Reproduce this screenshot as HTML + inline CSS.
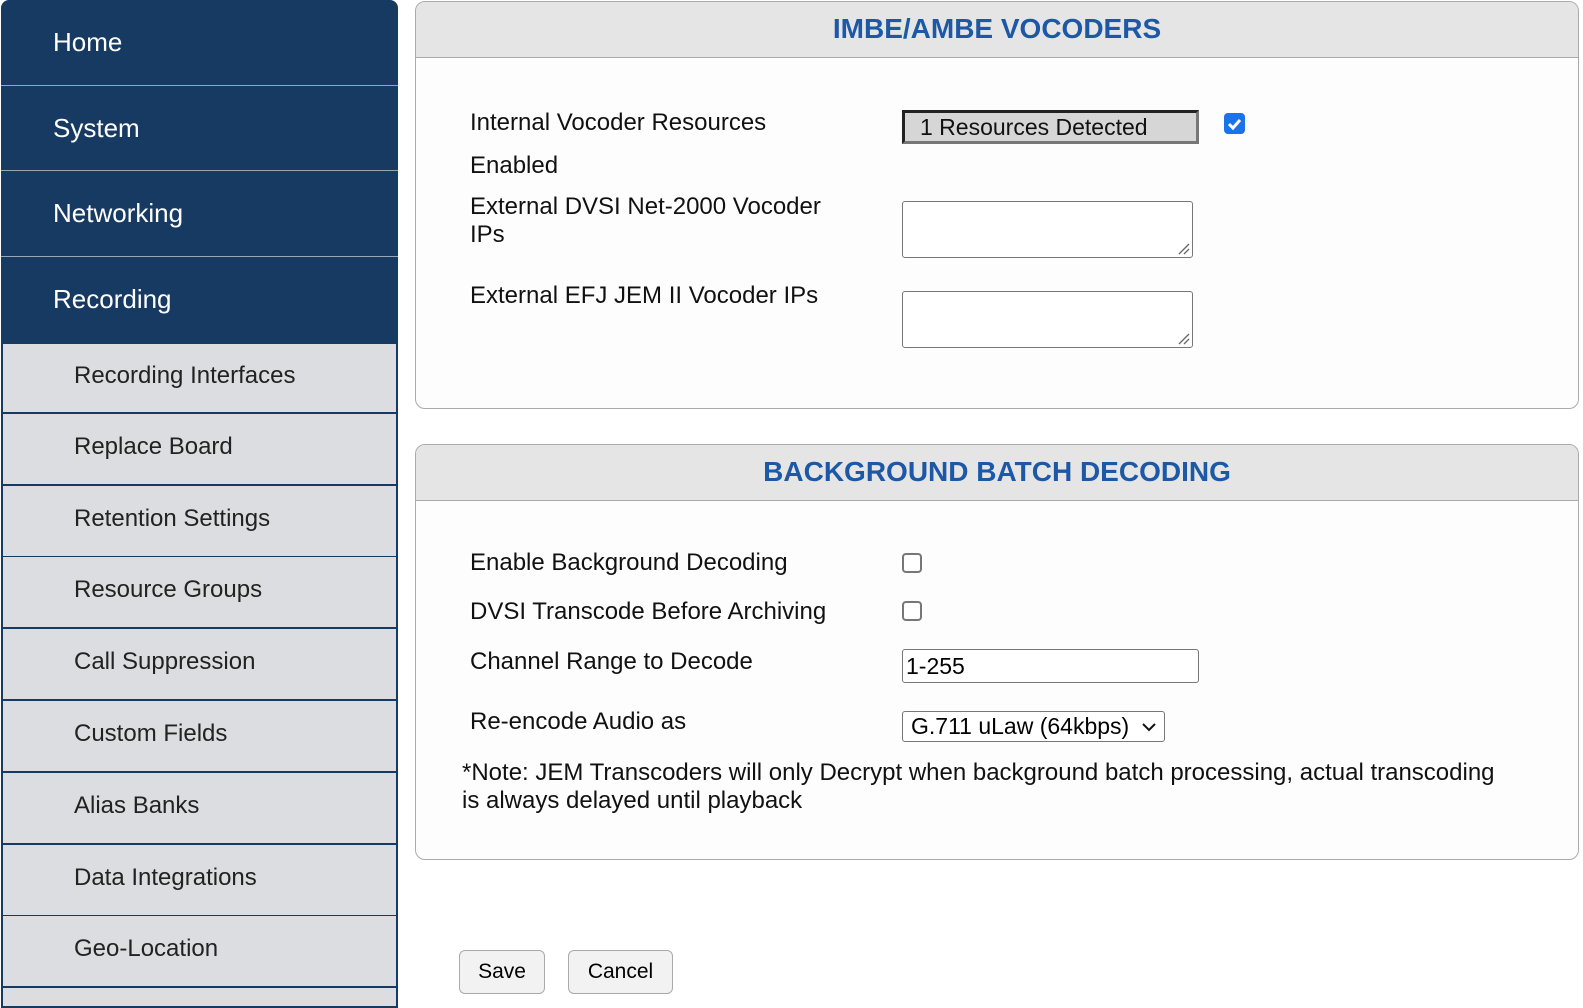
<!DOCTYPE html>
<html><head><style>
body{margin:0;width:1583px;height:1001px;overflow:hidden;background:#fff;font-family:"Liberation Sans",Arial,sans-serif;position:relative}
.a{position:absolute}
.nav{left:1px;width:397px;background:#173a63;color:#fff;font-size:26px;box-sizing:border-box;border-bottom:1px solid #9aa6b6;padding-left:52px;display:flex;align-items:center}
.sub{left:1px;width:397px;background:#dcdde0;color:#222;font-size:24px;box-sizing:border-box;border:2px solid #173a63;border-top:0;padding-left:71px;display:flex;align-items:center;height:72px;padding-bottom:4px}
.box{left:415px;width:1164px;border:1px solid #aaa;border-radius:10px;background:#fdfdfd;box-sizing:border-box;overflow:hidden}
.hd{height:55px;background:#e5e5e5;border-bottom:1px solid #aaa;text-align:center;color:#1d58a7;font-weight:bold;font-size:28px;line-height:54px}
.lb{left:470px;font-size:24px;color:#111;line-height:28px}
.ta{left:902px;width:291px;height:57px;border:1px solid #777;border-radius:3px;background:#fff;box-sizing:border-box}
.cb{width:20px;height:20px;border:2px solid #777;border-radius:4px;box-sizing:border-box;background:#fff;left:902px}
.btn{border:1px solid #aaa;border-radius:6px;background:#f2f2f2;font-size:21px;text-align:center;line-height:42px;top:950px;height:44px;box-sizing:border-box}
</style></head><body>
<div class="a nav" style="top:0;height:86px;border-radius:8px 8px 0 0">Home</div>
<div class="a nav" style="top:86px;height:85px">System</div>
<div class="a nav" style="top:171px;height:86px">Networking</div>
<div class="a nav" style="top:257px;height:85px;border-bottom:0">Recording</div>
<div class="a sub" style="top:342px;border-top:2px solid #173a63">Recording Interfaces</div>
<div class="a sub" style="top:414px">Replace Board</div>
<div class="a sub" style="top:486px">Retention Settings</div>
<div class="a sub" style="top:557px">Resource Groups</div>
<div class="a sub" style="top:629px">Call Suppression</div>
<div class="a sub" style="top:701px">Custom Fields</div>
<div class="a sub" style="top:773px">Alias Banks</div>
<div class="a sub" style="top:845px">Data Integrations</div>
<div class="a sub" style="top:916px">Geo-Location</div>
<div class="a sub" style="top:988px;height:20px"></div>

<div class="a box" style="top:1px;height:408px"><div class="hd">IMBE/AMBE VOCODERS</div></div>
<div class="a lb" style="top:109px">Internal Vocoder Resources</div>
<div class="a lb" style="top:152px">Enabled</div>
<div class="a lb" style="top:193px">External DVSI Net-2000 Vocoder<br>IPs</div>
<div class="a lb" style="top:282px">External EFJ JEM II Vocoder IPs</div>
<div class="a" style="left:902px;top:110px;width:297px;height:34px;background:#d6d6d6;border:3px solid;border-color:#222 #777 #777 #222;box-sizing:border-box;font-size:23px;line-height:28px;padding-left:15px;color:#111">1 Resources Detected</div>
<div class="a" style="left:1224px;top:113px;width:21px;height:21px;background:#1a73e8;border-radius:4px"><svg width="21" height="21"><path d="M5 11l4 4 7-8" stroke="#fff" stroke-width="3" fill="none"/></svg></div>
<div class="a ta" style="top:201px"><svg style="position:absolute;right:2px;bottom:2px" width="12" height="12"><path d="M1 11L11 1M6 11L11 6" stroke="#666" stroke-width="1.3"/></svg></div>
<div class="a ta" style="top:291px"><svg style="position:absolute;right:2px;bottom:2px" width="12" height="12"><path d="M1 11L11 1M6 11L11 6" stroke="#666" stroke-width="1.3"/></svg></div>

<div class="a box" style="top:444px;height:416px"><div class="hd">BACKGROUND BATCH DECODING</div></div>
<div class="a lb" style="top:549px">Enable Background Decoding</div>
<div class="a lb" style="top:598px">DVSI Transcode Before Archiving</div>
<div class="a lb" style="top:648px">Channel Range to Decode</div>
<div class="a lb" style="top:708px">Re-encode Audio as</div>
<div class="a cb" style="top:553px"></div>
<div class="a cb" style="top:601px"></div>
<div class="a" style="left:902px;top:649px;width:297px;height:34px;border:1px solid #777;border-radius:3px;box-sizing:border-box;font-size:23px;line-height:32px;padding-left:3px;background:#fff">1-255</div>
<div class="a" style="left:902px;top:711px;width:263px;height:31px;border:1px solid #777;border-radius:3px;box-sizing:border-box;font-size:23px;line-height:29px;padding-left:8px;background:#fff">G.711 uLaw (64kbps)<svg style="position:absolute;right:8px;top:10px" width="14" height="10"><path d="M1 2l6 6 6-6" stroke="#111" stroke-width="2" fill="none"/></svg></div>
<div class="a lb" style="left:462px;top:759px;width:1040px">*Note: JEM Transcoders will only Decrypt when background batch processing, actual transcoding is always delayed until playback</div>

<div class="a btn" style="left:459px;width:86px">Save</div>
<div class="a btn" style="left:568px;width:105px">Cancel</div>
</body></html>
